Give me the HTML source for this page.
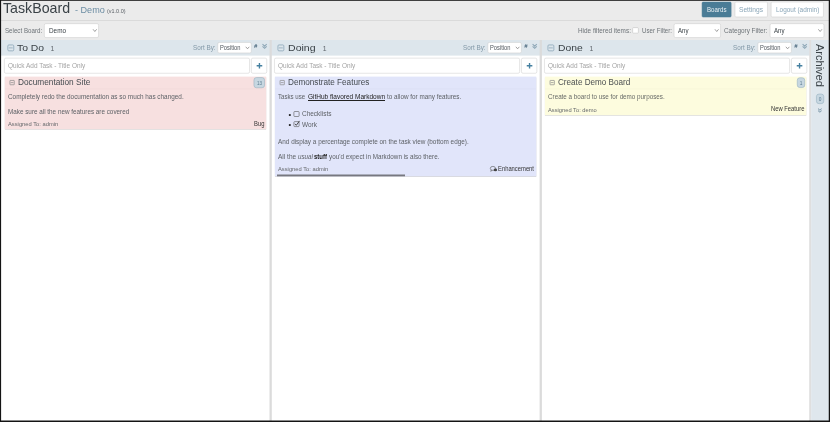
<!DOCTYPE html>
<html lang="en">
<head>
<meta charset="utf-8">
<title>TaskBoard - Demo</title>
<style>
html,body{margin:0;padding:0;background:#ebebeb;}
body{width:830px;height:422px;overflow:hidden;font-family:"Liberation Sans",sans-serif;}
#app{will-change:transform;position:relative;width:830px;height:422px;overflow:hidden;background:#ebebeb;}
#shapes{position:absolute;left:0;top:0;}
.t{position:absolute;white-space:pre;font-family:"Liberation Sans",sans-serif;}

</style>
</head>
<body>
<div id="app">
<svg id="shapes" width="830" height="422" viewBox="0 0 830 422">
<rect x="0" y="20.2" width="830" height="0.6" fill="#cfcfcf"/>
<rect x="702.05" y="2.05" width="29.1" height="15" rx="1" fill="#4a7c96" stroke="#4a7c96" stroke-width="0.5"/>
<rect x="734.95" y="2.05" width="32.5" height="14.9" rx="1" fill="#fff" stroke="#cbcbcb" stroke-width="0.5"/>
<rect x="771.15" y="2.05" width="52.3" height="14.9" rx="1" fill="#fff" stroke="#cbcbcb" stroke-width="0.5"/>
<rect x="44.35" y="23.65" width="54.2" height="13.9" rx="1.5" fill="#fff" stroke="#cbcbcb" stroke-width="0.5"/>
<rect x="674.05" y="23.65" width="46.5" height="13.9" rx="1.5" fill="#fff" stroke="#cbcbcb" stroke-width="0.5"/>
<rect x="770.05" y="23.65" width="53.9" height="13.9" rx="1.5" fill="#fff" stroke="#cbcbcb" stroke-width="0.5"/>
<path d="M93.3 29.6L94.85 31.5L96.4 29.6" fill="none" stroke="#777" stroke-width="0.7" stroke-linecap="round" stroke-linejoin="round"/>
<path d="M715.2 29.6L716.75 31.5L718.3 29.6" fill="none" stroke="#777" stroke-width="0.7" stroke-linecap="round" stroke-linejoin="round"/>
<path d="M818.6 29.6L820.15 31.5L821.7 29.6" fill="none" stroke="#777" stroke-width="0.7" stroke-linecap="round" stroke-linejoin="round"/>
<rect x="632.65" y="27.65" width="5.7" height="5.5" rx="0.8" fill="#fff" stroke="#bbb" stroke-width="0.5"/>
<rect x="1" y="40" width="828" height="381" fill="#fff"/>
<rect x="1" y="40" width="828" height="15.6" fill="#dde6ec"/>
<rect x="269.5" y="40" width="2.3" height="381" fill="#dbdbdb"/>
<rect x="539.6" y="40" width="2.3" height="381" fill="#dbdbdb"/>
<rect x="809.2" y="40" width="2.2" height="381" fill="#dfdfdf"/>
<rect x="811.2" y="40" width="18" height="381" fill="#dfe7ed"/>
<rect x="7.85" y="44.95" width="5.9" height="5.9" rx="1" fill="none" stroke="#94adbd" stroke-width="0.9"/>
<path d="M8.896 47.9H12.704" fill="none" stroke="#94adbd" stroke-width="0.9"/>
<rect x="217.75" y="42.45" width="33.5" height="10.5" rx="1.5" fill="#fff" stroke="#cbcbcb" stroke-width="0.5"/>
<path d="M246 47.1L247.5 48.8L249 47.1" fill="none" stroke="#777" stroke-width="0.7" stroke-linecap="round" stroke-linejoin="round"/>
<path d="M262.5 44.2l2.1 2l2.1 -2M262.5 46.3l2.1 2l2.1 -2" fill="none" stroke="#8fa8b8" stroke-width="1.1"/>
<rect x="4.35" y="58.15" width="245.2" height="15.1" rx="1.5" fill="#fff" stroke="#cbcbcb" stroke-width="0.5"/>
<rect x="251.35" y="58.15" width="15.4" height="15.1" rx="1.5" fill="#fff" stroke="#cbcbcb" stroke-width="0.5"/>
<path d="M259.45 63v5.6M256.65 65.8h5.6" fill="none" stroke="#4580a0" stroke-width="1.4"/>
<rect x="277.95" y="44.95" width="5.9" height="5.9" rx="1" fill="none" stroke="#94adbd" stroke-width="0.9"/>
<path d="M278.996 47.9H282.804" fill="none" stroke="#94adbd" stroke-width="0.9"/>
<rect x="487.85" y="42.45" width="33.5" height="10.5" rx="1.5" fill="#fff" stroke="#cbcbcb" stroke-width="0.5"/>
<path d="M516.1 47.1L517.6 48.8L519.1 47.1" fill="none" stroke="#777" stroke-width="0.7" stroke-linecap="round" stroke-linejoin="round"/>
<path d="M532.6 44.2l2.1 2l2.1 -2M532.6 46.3l2.1 2l2.1 -2" fill="none" stroke="#8fa8b8" stroke-width="1.1"/>
<rect x="274.45" y="58.15" width="245.2" height="15.1" rx="1.5" fill="#fff" stroke="#cbcbcb" stroke-width="0.5"/>
<rect x="521.45" y="58.15" width="15.4" height="15.1" rx="1.5" fill="#fff" stroke="#cbcbcb" stroke-width="0.5"/>
<path d="M529.55 63v5.6M526.75 65.8h5.6" fill="none" stroke="#4580a0" stroke-width="1.4"/>
<rect x="547.95" y="44.95" width="5.9" height="5.9" rx="1" fill="none" stroke="#94adbd" stroke-width="0.9"/>
<path d="M548.996 47.9H552.804" fill="none" stroke="#94adbd" stroke-width="0.9"/>
<rect x="757.85" y="42.45" width="33.5" height="10.5" rx="1.5" fill="#fff" stroke="#cbcbcb" stroke-width="0.5"/>
<path d="M786.1 47.1L787.6 48.8L789.1 47.1" fill="none" stroke="#777" stroke-width="0.7" stroke-linecap="round" stroke-linejoin="round"/>
<path d="M802.6 44.2l2.1 2l2.1 -2M802.6 46.3l2.1 2l2.1 -2" fill="none" stroke="#8fa8b8" stroke-width="1.1"/>
<rect x="544.45" y="58.15" width="245.2" height="15.1" rx="1.5" fill="#fff" stroke="#cbcbcb" stroke-width="0.5"/>
<rect x="791.45" y="58.15" width="15.4" height="15.1" rx="1.5" fill="#fff" stroke="#cbcbcb" stroke-width="0.5"/>
<path d="M799.55 63v5.6M796.75 65.8h5.6" fill="none" stroke="#4580a0" stroke-width="1.4"/>
<rect x="4.8" y="77.2" width="261.4" height="52.5" rx="0.5" fill="rgba(0,0,0,0.16)"/>
<rect x="4.8" y="76.6" width="261.4" height="52.5" fill="#f7e0e0"/>
<rect x="9.95" y="80.45" width="4.3" height="4.3" rx="0.3" fill="none" stroke="#8a8a8a" stroke-width="0.7"/>
<path d="M10.7 82.6H13.5" fill="none" stroke="#8a8a8a" stroke-width="0.7"/>
<rect x="4.8" y="88.7" width="261.1" height="0.5" fill="rgba(0,0,0,0.05)"/>
<rect x="274.9" y="77.2" width="261.4" height="99.7" rx="0.5" fill="rgba(0,0,0,0.16)"/>
<rect x="274.9" y="76.6" width="261.4" height="99.7" fill="#e1e5fa"/>
<rect x="280.05" y="80.45" width="4.3" height="4.3" rx="0.3" fill="none" stroke="#8a8a8a" stroke-width="0.7"/>
<path d="M280.8 82.6H283.6" fill="none" stroke="#8a8a8a" stroke-width="0.7"/>
<rect x="274.9" y="88.7" width="261.1" height="0.5" fill="rgba(0,0,0,0.05)"/>
<rect x="544.9" y="77.2" width="261.4" height="38.5" rx="0.5" fill="rgba(0,0,0,0.16)"/>
<rect x="544.9" y="76.6" width="261.4" height="38.5" fill="#fdfcde"/>
<rect x="550.05" y="80.45" width="4.3" height="4.3" rx="0.3" fill="none" stroke="#8a8a8a" stroke-width="0.7"/>
<path d="M550.8 82.6H553.6" fill="none" stroke="#8a8a8a" stroke-width="0.7"/>
<rect x="544.9" y="88.7" width="261.1" height="0.5" fill="rgba(0,0,0,0.05)"/>
<rect x="277" y="174.5" width="128" height="1.8" fill="#77787f"/>
<rect x="253.95" y="77.55" width="10.6" height="10.2" rx="2.5" fill="#c7d7e1" stroke="#8faabb" stroke-width="0.5"/>
<rect x="797.25" y="77.75" width="7.5" height="9.8" rx="2.5" fill="#c7d7e1" stroke="#8faabb" stroke-width="0.5"/>
<rect x="816.45" y="94.05" width="7.3" height="9.6" rx="2.5" fill="#c7d7e1" stroke="#8faabb" stroke-width="0.5"/>
<rect x="293.9" y="111.5" width="5.2" height="5" rx="0.8" fill="none" stroke="#555" stroke-width="0.6"/>
<rect x="293.9" y="121.6" width="5.2" height="5" rx="0.8" fill="none" stroke="#555" stroke-width="0.6"/>
<path d="M295 123.8l1.3 1.5l3.2 -4.4" fill="none" stroke="#333" stroke-width="0.9"/>
<ellipse cx="492.9" cy="168.4" rx="2.6" ry="2.0" fill="none" stroke="#555" stroke-width="0.6"/>
<ellipse cx="495.4" cy="169.9" rx="1.7" ry="1.4" fill="#444"/>
<path d="M491.2 170l-0.6 1.3l1.6 -0.8" fill="none" stroke="#555" stroke-width="0.5"/>
<rect x="0" y="0" width="830" height="0.8" fill="#141414"/>
<rect x="0" y="0" width="1.1" height="422" fill="#141414"/>
<rect x="828.75" y="0" width="1.25" height="422" fill="#141414"/>
<rect x="0" y="420.5" width="830" height="1.5" fill="#141414"/>
</svg>
<span class="t" style="left:17.40px;top:42px;font-size:9.6px;line-height:11px;color:#3a4247;transform:scaleX(1.0813);transform-origin:0 0;">To Do</span>
<span class="t" style="left:50.60px;top:45px;font-size:6.8px;line-height:7px;color:#5f656b;">1</span>
<span class="t" style="left:193.20px;top:44px;font-size:6.3px;line-height:7px;color:#8399a8;transform:scaleX(1.0086);transform-origin:0 0;">Sort By:</span>
<span class="t" style="left:219.60px;top:44px;font-size:6.5px;line-height:7px;color:#50565c;transform:scaleX(0.8822);transform-origin:0 0;">Position</span>
<span class="t" style="left:254.10px;top:43px;font-size:5.9px;line-height:6px;color:#3f5f75;font-weight:bold;font-style:italic;">#</span>
<span class="t" style="left:7.80px;top:62px;font-size:6.6px;line-height:7px;color:#a4a4a4;transform:scaleX(0.9813);transform-origin:0 0;">Quick Add Task - Title Only</span>
<span class="t" style="left:288.00px;top:42px;font-size:9.6px;line-height:11px;color:#3a4247;transform:scaleX(1.1006);transform-origin:0 0;">Doing</span>
<span class="t" style="left:322.80px;top:45px;font-size:6.8px;line-height:7px;color:#5f656b;">1</span>
<span class="t" style="left:463.30px;top:44px;font-size:6.3px;line-height:7px;color:#8399a8;transform:scaleX(1.0086);transform-origin:0 0;">Sort By:</span>
<span class="t" style="left:489.70px;top:44px;font-size:6.5px;line-height:7px;color:#50565c;transform:scaleX(0.8822);transform-origin:0 0;">Position</span>
<span class="t" style="left:524.20px;top:43px;font-size:5.9px;line-height:6px;color:#3f5f75;font-weight:bold;font-style:italic;">#</span>
<span class="t" style="left:277.90px;top:62px;font-size:6.6px;line-height:7px;color:#a4a4a4;transform:scaleX(0.9813);transform-origin:0 0;">Quick Add Task - Title Only</span>
<span class="t" style="left:558.10px;top:42px;font-size:9.6px;line-height:11px;color:#3a4247;transform:scaleX(1.0768);transform-origin:0 0;">Done</span>
<span class="t" style="left:589.50px;top:45px;font-size:6.8px;line-height:7px;color:#5f656b;">1</span>
<span class="t" style="left:733.30px;top:44px;font-size:6.3px;line-height:7px;color:#8399a8;transform:scaleX(1.0086);transform-origin:0 0;">Sort By:</span>
<span class="t" style="left:759.70px;top:44px;font-size:6.5px;line-height:7px;color:#50565c;transform:scaleX(0.8822);transform-origin:0 0;">Position</span>
<span class="t" style="left:794.20px;top:43px;font-size:5.9px;line-height:6px;color:#3f5f75;font-weight:bold;font-style:italic;">#</span>
<span class="t" style="left:547.90px;top:62px;font-size:6.6px;line-height:7px;color:#a4a4a4;transform:scaleX(0.9813);transform-origin:0 0;">Quick Add Task - Title Only</span>
<span class="t" style="left:2.60px;top:0px;font-size:14.6px;line-height:16px;color:#3a4247;transform:scaleX(0.9731);transform-origin:0 0;">TaskBoard</span>
<span class="t" style="left:74.80px;top:4px;font-size:9.6px;line-height:11px;color:#6c8da3;transform:scaleX(0.9474);transform-origin:0 0;">- Demo</span>
<span class="t" style="left:107.10px;top:8px;font-size:5.2px;line-height:6px;color:#5a6066;transform:scaleX(1.0515);transform-origin:0 0;">(v1.0.0)</span>
<span class="t" style="left:707.00px;top:6px;font-size:6.6px;line-height:7px;color:#e8f0f4;transform:scaleX(0.9327);transform-origin:0 0;">Boards</span>
<span class="t" style="left:738.80px;top:6px;font-size:6.6px;line-height:7px;color:#8aa6b8;transform:scaleX(1.0072);transform-origin:0 0;">Settings</span>
<span class="t" style="left:775.70px;top:6px;font-size:6.6px;line-height:7px;color:#8aa6b8;transform:scaleX(0.9761);transform-origin:0 0;">Logout (admin)</span>
<span class="t" style="left:4.60px;top:27px;font-size:6.9px;line-height:7px;color:#6d7378;transform:scaleX(0.8967);transform-origin:0 0;">Select Board:</span>
<span class="t" style="left:48.50px;top:27px;font-size:6.9px;line-height:7px;color:#3a4247;transform:scaleX(0.9244);transform-origin:0 0;">Demo</span>
<span class="t" style="left:577.80px;top:27px;font-size:6.9px;line-height:7px;color:#6d7378;transform:scaleX(0.9271);transform-origin:0 0;">Hide filtered items:</span>
<span class="t" style="left:641.50px;top:27px;font-size:6.9px;line-height:7px;color:#6d7378;transform:scaleX(0.8901);transform-origin:0 0;">User Filter:</span>
<span class="t" style="left:678.00px;top:27px;font-size:6.9px;line-height:7px;color:#3a4247;transform:scaleX(0.8842);transform-origin:0 0;">Any</span>
<span class="t" style="left:724.00px;top:27px;font-size:6.9px;line-height:7px;color:#6d7378;transform:scaleX(0.9234);transform-origin:0 0;">Category Filter:</span>
<span class="t" style="left:773.50px;top:27px;font-size:6.9px;line-height:7px;color:#3a4247;transform:scaleX(0.8842);transform-origin:0 0;">Any</span>
<span class="t" style="left:17.70px;top:77px;font-size:8.3px;line-height:10px;color:#454b50;transform:scaleX(0.9983);transform-origin:0 0;">Documentation Site</span>
<span class="t" style="left:7.80px;top:93px;font-size:6.5px;line-height:7px;color:#5d6166;transform:scaleX(0.9843);transform-origin:0 0;">Completely redo the documentation as so much has changed.</span>
<span class="t" style="left:7.80px;top:108px;font-size:6.5px;line-height:7px;color:#5d6166;transform:scaleX(0.9723);transform-origin:0 0;">Make sure all the new features are covered</span>
<span class="t" style="left:7.80px;top:121px;font-size:5.7px;line-height:6px;color:#66696c;transform:scaleX(1.0135);transform-origin:0 0;">Assigned To: admin</span>
<span class="t" style="left:253.70px;top:120px;font-size:6.5px;line-height:7px;color:#333;transform:scaleX(0.8982);transform-origin:0 0;">Bug</span>
<span class="t" style="left:287.70px;top:77px;font-size:8.3px;line-height:10px;color:#454b50;transform:scaleX(0.9849);transform-origin:0 0;">Demonstrate Features</span>
<span class="t" style="left:277.80px;top:93px;font-size:6.5px;line-height:7px;color:#5d6166;transform:scaleX(0.9410);transform-origin:0 0;">Tasks use</span>
<span class="t" style="left:307.50px;top:93px;font-size:6.5px;line-height:7px;color:#222;transform:scaleX(1.0006);transform-origin:0 0;text-decoration:underline;text-decoration-thickness:0.6px;text-underline-offset:0.6px;">GitHub flavored Markdown</span>
<span class="t" style="left:386.50px;top:93px;font-size:6.5px;line-height:7px;color:#5d6166;transform:scaleX(0.9746);transform-origin:0 0;">to allow for many features.</span>
<span class="t" style="left:288.40px;top:110px;font-size:7.6px;line-height:9px;color:#222;">•</span>
<span class="t" style="left:288.40px;top:120px;font-size:7.6px;line-height:9px;color:#222;">•</span>
<span class="t" style="left:301.50px;top:110px;font-size:6.5px;line-height:7px;color:#5d6166;transform:scaleX(0.9958);transform-origin:0 0;">Checklists</span>
<span class="t" style="left:301.50px;top:121px;font-size:6.5px;line-height:7px;color:#5d6166;transform:scaleX(0.9959);transform-origin:0 0;">Work</span>
<span class="t" style="left:277.80px;top:138px;font-size:6.5px;line-height:7px;color:#5d6166;transform:scaleX(0.9828);transform-origin:0 0;">And display a percentage complete on the task view (bottom edge).</span>
<span class="t" style="left:277.80px;top:153px;font-size:6.5px;line-height:7px;color:#5d6166;transform:scaleX(1.0067);transform-origin:0 0;">All the</span>
<span class="t" style="left:297.50px;top:153px;font-size:6.5px;line-height:7px;color:#5d6166;transform:scaleX(0.9648);transform-origin:0 0;font-style:italic;">usual</span>
<span class="t" style="left:314.00px;top:153px;font-size:6.5px;line-height:7px;color:#222;transform:scaleX(0.9224);transform-origin:0 0;font-weight:bold;">stuff</span>
<span class="t" style="left:329.00px;top:153px;font-size:6.5px;line-height:7px;color:#5d6166;transform:scaleX(0.9726);transform-origin:0 0;">you'd expect in Markdown is also there.</span>
<span class="t" style="left:277.70px;top:166px;font-size:5.9px;line-height:6px;color:#66696c;transform:scaleX(0.9783);transform-origin:0 0;">Assigned To: admin</span>
<span class="t" style="left:497.90px;top:165px;font-size:6.5px;line-height:7px;color:#333;transform:scaleX(0.8972);transform-origin:0 0;">Enhancement</span>
<span class="t" style="left:557.70px;top:77px;font-size:8.3px;line-height:10px;color:#4b4f50;transform:scaleX(0.9797);transform-origin:0 0;">Create Demo Board</span>
<span class="t" style="left:547.80px;top:93px;font-size:6.5px;line-height:7px;color:#686b68;transform:scaleX(0.9670);transform-origin:0 0;">Create a board to use for demo purposes.</span>
<span class="t" style="left:547.80px;top:107px;font-size:5.7px;line-height:6px;color:#66696c;transform:scaleX(1.0087);transform-origin:0 0;">Assigned To: demo</span>
<span class="t" style="left:770.80px;top:105px;font-size:6.5px;line-height:7px;color:#333;transform:scaleX(0.8974);transform-origin:0 0;">New Feature</span>
<span class="t" style="left:256.90px;top:81px;font-size:4.8px;line-height:5px;color:#5d7d91;transform:scaleX(0.9544);transform-origin:0 0;">13</span>
<span class="t" style="left:799.70px;top:81px;font-size:4.8px;line-height:5px;color:#5d7d91;">1</span>
<span class="t" style="left:818.80px;top:97px;font-size:4.8px;line-height:5px;color:#5d7d91;">0</span>
<span class="t" style="left:826.1px;top:44.2px;font-size:10.6px;line-height:12px;color:#3a4247;transform:rotate(90deg) scaleX(1.04);transform-origin:0 0;">Archived</span>
<span class="t" style="left:823.6px;top:108px;font-size:8.5px;line-height:9px;color:#6f8da0;transform:rotate(90deg);transform-origin:0 0;">»</span>
</div>
</body>
</html>
